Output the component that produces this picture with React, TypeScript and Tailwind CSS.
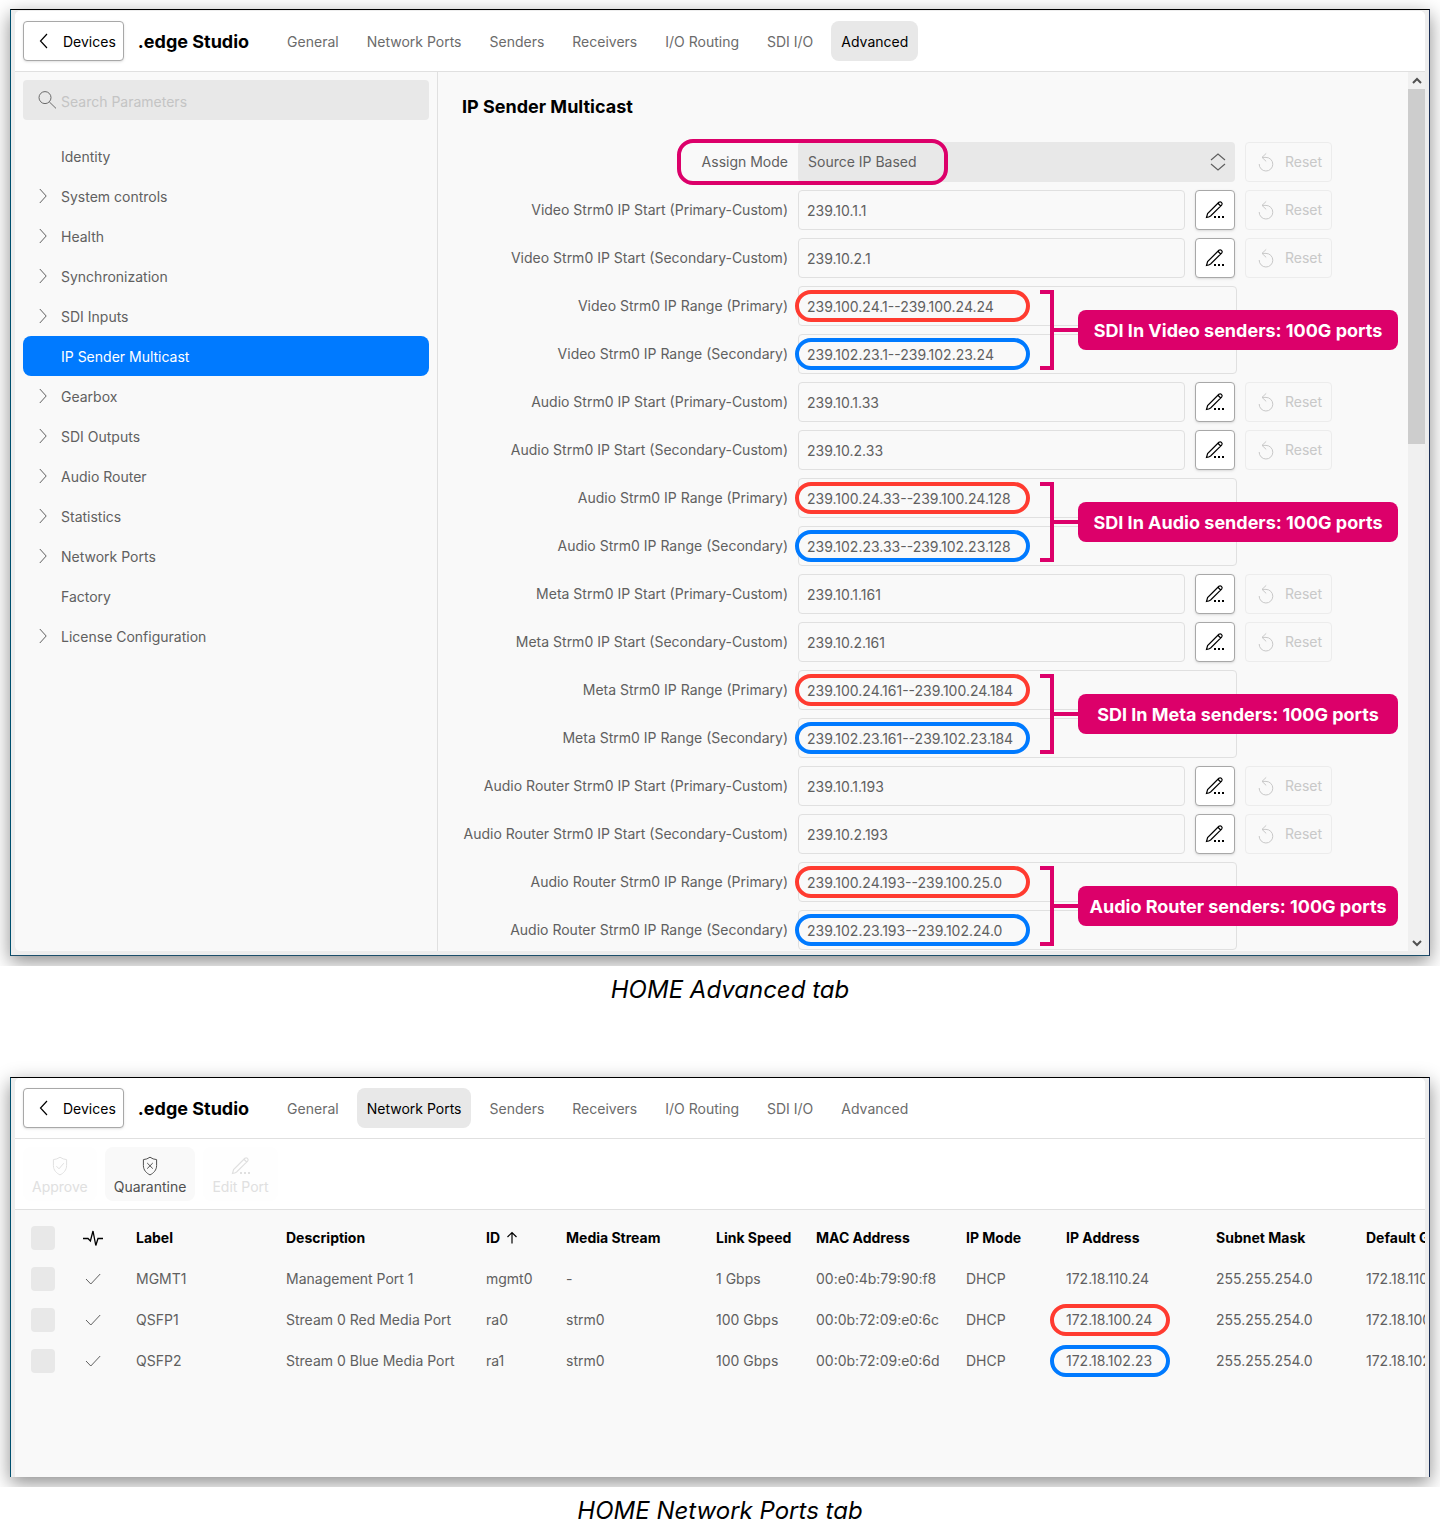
import type { ReactNode } from 'react';

const TABS = [
  'General',
  'Network Ports',
  'Senders',
  'Receivers',
  'I/O Routing',
  'SDI I/O',
  'Advanced',
];

const MENU = [
  { label: 'Identity', expandable: false },
  { label: 'System controls', expandable: true },
  { label: 'Health', expandable: true },
  { label: 'Synchronization', expandable: true },
  { label: 'SDI Inputs', expandable: true },
  { label: 'IP Sender Multicast', expandable: false },
  { label: 'Gearbox', expandable: true },
  { label: 'SDI Outputs', expandable: true },
  { label: 'Audio Router', expandable: true },
  { label: 'Statistics', expandable: true },
  { label: 'Network Ports', expandable: true },
  { label: 'Factory', expandable: false },
  { label: 'License Configuration', expandable: true },
];

const STREAMS = [
  {
    name: 'Video',
    start: ['239.10.1.1', '239.10.2.1'],
    range: ['239.100.24.1--239.100.24.24', '239.102.23.1--239.102.23.24'],
    note: 'SDI In Video senders: 100G ports',
  },
  {
    name: 'Audio',
    start: ['239.10.1.33', '239.10.2.33'],
    range: ['239.100.24.33--239.100.24.128', '239.102.23.33--239.102.23.128'],
    note: 'SDI In Audio senders: 100G ports',
  },
  {
    name: 'Meta',
    start: ['239.10.1.161', '239.10.2.161'],
    range: ['239.100.24.161--239.100.24.184', '239.102.23.161--239.102.23.184'],
    note: 'SDI In Meta senders: 100G ports',
  },
  {
    name: 'Audio Router',
    start: ['239.10.1.193', '239.10.2.193'],
    range: ['239.100.24.193--239.100.25.0', '239.102.23.193--239.102.24.0'],
    note: 'Audio Router senders: 100G ports',
  },
];

const PORTS = [
  {
    label: 'MGMT1',
    description: 'Management Port 1',
    id: 'mgmt0',
    stream: '-',
    speed: '1 Gbps',
    mac: '00:e0:4b:79:90:f8',
    ip: '172.18.110.24',
    gateway: '172.18.110.1',
    ring: '',
  },
  {
    label: 'QSFP1',
    description: 'Stream 0 Red Media Port',
    id: 'ra0',
    stream: 'strm0',
    speed: '100 Gbps',
    mac: '00:0b:72:09:e0:6c',
    ip: '172.18.100.24',
    gateway: '172.18.100.1',
    ring: 'border-[#ff3b30]',
  },
  {
    label: 'QSFP2',
    description: 'Stream 0 Blue Media Port',
    id: 'ra1',
    stream: 'strm0',
    speed: '100 Gbps',
    mac: '00:0b:72:09:e0:6d',
    ip: '172.18.102.23',
    gateway: '172.18.102.1',
    ring: 'border-[#007aff]',
  },
];

interface IconProps {
  children: ReactNode;
  className?: string;
}

function Icon({ children, className = '' }: IconProps) {
  return (
    <svg
      viewBox="0 0 20 20"
      className={`size-5 shrink-0 ${className}`}
      fill="none"
      stroke="currentColor"
      strokeWidth="1"
      aria-hidden="true"
    >
      {children}
    </svg>
  );
}

function PencilIcon() {
  return (
    <Icon>
      <path
        d="M1.5 17.5 L2.6 13.6 L13.9 2.3 Q15.2 1.2 16.5 2.4 Q17.8 3.7 16.6 5.1 L5.6 16 Q4 17.2 1.5 17.5 Z M12.9 3.3 L15.7 6"
        strokeWidth="1.2"
      />
      <path d="M9 17 h2 M13 17 h2 M17 17 h2" strokeWidth="2" />
    </Icon>
  );
}

function ShieldIcon({ children }: { children: ReactNode }) {
  return (
    <Icon>
      <path d="M10 1.2 Q13 3.4 16.6 3.6 V9.6 C16.6 14 13.6 17.2 10 18.9 C6.4 17.2 3.4 14 3.4 9.6 V3.6 Q7 3.4 10 1.2 Z" />
      {children}
    </Icon>
  );
}

function Header({ active }: { active: string }) {
  return (
    <header className="flex items-center border-b border-[#e0e0e0] bg-white px-2 py-2.5">
      <button className="flex h-10 shrink-0 items-center gap-[9px] rounded border border-[#a8a8a8] bg-white pr-[7px] pl-2.5 text-black shadow-sm">
        <Icon>
          <path d="M13 3 L6.5 10 L13 17" strokeWidth="1.2" />
        </Icon>
        <span className="pt-0.5">Devices</span>
      </button>
      <h1 className="ml-3.5 shrink-0 pt-0.5 text-lg font-bold text-black">
        .edge Studio
      </h1>
      <nav className="ml-7 flex gap-2">
        {TABS.map((tab) => (
          <button
            key={tab}
            className={`h-10 rounded-lg px-2.5 pt-0.5 whitespace-nowrap ${
              tab === active ? 'bg-[#e8e8e8] text-black' : 'text-[#6b6b6b]'
            }`}
          >
            {tab}
          </button>
        ))}
      </nav>
    </header>
  );
}

function Sidebar() {
  return (
    <aside className="w-[423px] shrink-0 border-r border-[#e0e0e0] p-2">
      <label className="flex h-10 items-center gap-1 rounded bg-[#e8e8e8] pl-3.5 text-[#6b6b6b]">
        <Icon>
          <circle cx="8" cy="7.6" r="6" />
          <path d="M12.3 11.9 L19 18.4" />
        </Icon>
        <input
          type="search"
          aria-label="Search Parameters"
          placeholder="Search Parameters"
          className="h-10 w-full bg-transparent pt-0.5 outline-none placeholder:text-[#c4c4c4]"
        />
      </label>
      <nav className="mt-4">
        {MENU.map((item) => (
          <button
            key={item.label}
            className={`flex h-10 w-full items-center gap-2 rounded-lg pl-2.5 text-left ${
              item.label === 'IP Sender Multicast'
                ? 'bg-[#007aff] text-white'
                : ''
            }`}
          >
            <Icon>
              {item.expandable && <path d="M6.8 3 L13.2 10 L6.8 17" />}
            </Icon>
            <span className="pt-0.5">{item.label}</span>
          </button>
        ))}
      </nav>
    </aside>
  );
}

function ResetButton() {
  return (
    <button
      disabled
      className="flex h-10 items-center gap-[9px] rounded border border-[#ececec] pl-2.5 text-[#c8c8c8]"
    >
      <Icon>
        <path d="M3.2 12 A6.8 6.8 0 1 0 10 5.4 H6 M10.2 1.4 L6 5.4 L10.2 9.4" />
      </Icon>
      Reset
    </button>
  );
}

function StartRow({ label, value }: { label: string; value: string }) {
  return (
    <div className="grid grid-cols-[326px_minmax(0,437px)_87px] items-center gap-2.5">
      <label htmlFor={label} className="text-right whitespace-nowrap">
        {label}
      </label>
      <div className="flex gap-2.5">
        <input
          id={label}
          readOnly
          value={value}
          className="h-10 min-w-0 flex-1 rounded border border-[#e0e0e0] px-2 outline-none"
        />
        <button
          aria-label="Edit"
          className="flex size-10 items-center justify-center rounded border border-[#a8a8a8] bg-white text-black shadow-sm"
        >
          <PencilIcon />
        </button>
      </div>
      <ResetButton />
    </div>
  );
}

function RangeRow({ label, value, ring }: { label: string; value: string; ring: string }) {
  return (
    <div className="grid grid-cols-[326px_minmax(0,439px)] items-center gap-2.5">
      <label htmlFor={label} className="text-right whitespace-nowrap">
        {label}
      </label>
      <div className="relative">
        <input
          id={label}
          readOnly
          value={value}
          className="block h-10 w-full rounded border border-[#e0e0e0] px-2 outline-none"
        />
        <span
          className={`pointer-events-none absolute top-1 -left-[3px] h-8 w-[235px] rounded-full border-4 ${ring}`}
        />
      </div>
    </div>
  );
}

function Callout({ text }: { text: string }) {
  return (
    <div className="absolute top-1 left-[578px] flex h-20 items-center">
      <svg
        viewBox="0 0 38 80"
        className="h-20 w-[38px]"
        fill="none"
        stroke="#dc006a"
        strokeWidth="4"
        aria-hidden="true"
      >
        <path d="M0 2 H12 V78 H0 M12 40 H38" />
      </svg>
      <div className="flex h-10 w-80 items-center justify-center rounded-lg bg-[#dc006a] pt-0.5 text-lg font-bold whitespace-nowrap text-white">
        {text}
      </div>
    </div>
  );
}

function Scrollbar() {
  return (
    <div className="flex w-[17px] shrink-0 flex-col bg-[#f0f0f0] text-[#505050]">
      <button aria-label="Scroll up" className="flex h-[17px] items-center justify-center">
        <svg viewBox="0 0 10 10" className="size-2.5" fill="none" stroke="currentColor" strokeWidth="2">
          <path d="M1 7 L5 3 L9 7" />
        </svg>
      </button>
      <div className="flex-1">
        <div className="h-[42%] bg-[#cdcdcd]" />
      </div>
      <button aria-label="Scroll down" className="flex h-[17px] items-center justify-center">
        <svg viewBox="0 0 10 10" className="size-2.5" fill="none" stroke="currentColor" strokeWidth="2">
          <path d="M1 3 L5 7 L9 3" />
        </svg>
      </button>
    </div>
  );
}

function MulticastForm() {
  return (
    <main className="min-w-0 flex-1 px-6 pt-[21px] pb-px">
      <h2 className="mb-[21px] text-lg leading-7 font-bold text-black">
        IP Sender Multicast
      </h2>
      <div className="flex flex-col gap-2">
        <div className="relative grid grid-cols-[326px_minmax(0,437px)_87px] items-center gap-2.5">
          <label htmlFor="assign-mode" className="text-right">
            Assign Mode
          </label>
          <div className="relative">
            <select
              id="assign-mode"
              className="block h-10 w-full appearance-none rounded bg-[#e8e8e8] px-2.5 outline-none"
            >
              <option>Source IP Based</option>
            </select>
            <Icon className="pointer-events-none absolute top-2.5 right-[7px]">
              <path d="M3 8 L10 2 L17 8 M3 12 L10 18 L17 12" strokeWidth="1.2" />
            </Icon>
          </div>
          <ResetButton />
          <span className="pointer-events-none absolute -top-[3px] left-[215px] h-[46px] w-[271px] rounded-2xl border-4 border-[#dc006a]" />
        </div>
        {STREAMS.map((s) => (
          <div key={s.name} className="flex flex-col gap-2">
            <StartRow
              label={`${s.name} Strm0 IP Start (Primary-Custom)`}
              value={s.start[0]}
            />
            <StartRow
              label={`${s.name} Strm0 IP Start (Secondary-Custom)`}
              value={s.start[1]}
            />
            <div className="relative flex flex-col gap-2">
              <RangeRow
                label={`${s.name} Strm0 IP Range (Primary)`}
                value={s.range[0]}
                ring="border-[#ff3b30]"
              />
              <RangeRow
                label={`${s.name} Strm0 IP Range (Secondary)`}
                value={s.range[1]}
                ring="border-[#007aff]"
              />
              <Callout text={s.note} />
            </div>
          </div>
        ))}
      </div>
    </main>
  );
}

function Toolbar() {
  const button =
    'flex h-[54px] flex-col items-center justify-center gap-px rounded-lg px-[9px] pt-1 leading-5';

  return (
    <div className="flex gap-2 border-b border-[#e0e0e0] bg-white p-2">
      <button disabled className={`${button} bg-[#fefefe] text-[#e0e0e0]`}>
        <ShieldIcon>
          <path d="M6.4 10.2 L9 12.8 L13.8 7.2" />
        </ShieldIcon>
        Approve
      </button>
      <button className={`${button} bg-[#f9f9f9] text-[#505050]`}>
        <ShieldIcon>
          <path d="M7.2 7 L12.8 12.6 M12.8 7 L7.2 12.6" />
        </ShieldIcon>
        Quarantine
      </button>
      <button disabled className={`${button} bg-[#fefefe] text-[#e0e0e0]`}>
        <PencilIcon />
        Edit Port
      </button>
    </div>
  );
}

function Checkbox({ label }: { label: string }) {
  return (
    <input
      type="checkbox"
      aria-label={label}
      className="block size-6 appearance-none rounded bg-[#e8e8e8]"
    />
  );
}

function PortsTable() {
  return (
    <div className="overflow-hidden pt-2">
      <table className="w-[1491px] table-fixed text-left whitespace-nowrap">
        <colgroup>
          <col className="w-14" />
          <col className="w-[55px]" />
          <col className="w-[150px]" />
          <col className="w-[200px]" />
          <col className="w-20" />
          <col className="w-[150px]" />
          <col className="w-[100px]" />
          <col className="w-[150px]" />
          <col className="w-[100px]" />
          <col className="w-[150px]" />
          <col className="w-[150px]" />
          <col className="w-[150px]" />
        </colgroup>
        <thead className="text-black">
          <tr className="h-10 [&>th]:px-2.5 [&>th]:font-bold">
            <th>
              <div className="pl-1.5">
                <Checkbox label="Select all ports" />
              </div>
            </th>
            <th>
              <Icon className="ml-0.5">
                <path d="M0 10.5 H5 L7.4 13 L10 3 L12.8 17.5 L15 10.5 H20" strokeWidth="1.3" />
              </Icon>
            </th>
            <th>Label</th>
            <th>Description</th>
            <th>
              <span className="flex items-center gap-0.5">
                ID
                <Icon>
                  <path d="M10 15.5 V4.5 M5.5 9 L10 4.5 L14.5 9" strokeWidth="1.2" />
                </Icon>
              </span>
            </th>
            <th>Media Stream</th>
            <th>Link Speed</th>
            <th>MAC Address</th>
            <th>IP Mode</th>
            <th>IP Address</th>
            <th>Subnet Mask</th>
            <th>Default Gateway</th>
          </tr>
        </thead>
        <tbody>
          {PORTS.map((port) => (
            <tr key={port.id} className="h-[41px] [&>td]:px-2.5">
              <td>
                <div className="pl-1.5">
                  <Checkbox label={`Select ${port.label}`} />
                </div>
              </td>
              <td>
                <Icon className="ml-0.5">
                  <path d="M3 10 L7.8 15 L17.2 5" />
                </Icon>
              </td>
              <td>{port.label}</td>
              <td>{port.description}</td>
              <td>{port.id}</td>
              <td>{port.stream}</td>
              <td>{port.speed}</td>
              <td>{port.mac}</td>
              <td>DHCP</td>
              <td>
                <span className="relative block">
                  {port.ip}
                  {port.ring && (
                    <span
                      className={`absolute -top-1.5 -left-4 h-8 w-[120px] rounded-full border-4 ${port.ring}`}
                    />
                  )}
                </span>
              </td>
              <td>255.255.254.0</td>
              <td>{port.gateway}</td>
            </tr>
          ))}
        </tbody>
      </table>
    </div>
  );
}

export default function App() {
  return (
    <div className="bg-white font-['Inter',sans-serif] text-sm text-[#606060]">
      <figure>
        <div className="overflow-hidden px-2.5 pt-[9px] pb-2.5">
          <div className="border border-t-black border-r-[#1c2f55] border-b-[#1c4f6b] border-l-[#00506f] bg-[#ededed] px-1 pt-px pb-1 shadow-[0_6px_18px_rgba(0,0,0,0.45)]">
            <div className="overflow-hidden rounded-[5px] bg-[#f9f9f9]">
              <Header active="Advanced" />
              <div className="flex">
                <Sidebar />
                <MulticastForm />
                <Scrollbar />
              </div>
            </div>
          </div>
        </div>
        <figcaption className="pt-2 pl-5 text-center text-2xl text-black italic">
          HOME Advanced tab
        </figcaption>
      </figure>

      <figure className="mt-[51px]">
        <div className="overflow-hidden px-2.5 pt-5 pb-2.5">
          <div className="border border-b-0 border-t-black border-r-[#1c2f55] border-l-[#00506f] bg-[#ededed] px-1 shadow-[0_6px_18px_rgba(0,0,0,0.45)]">
            <div className="min-h-[399px] overflow-hidden rounded-t-[5px] bg-[#f9f9f9]">
              <Header active="Network Ports" />
              <Toolbar />
              <PortsTable />
            </div>
          </div>
        </div>
        <figcaption className="pt-2 text-center text-2xl text-black italic">
          HOME Network Ports tab
        </figcaption>
      </figure>
    </div>
  );
}
